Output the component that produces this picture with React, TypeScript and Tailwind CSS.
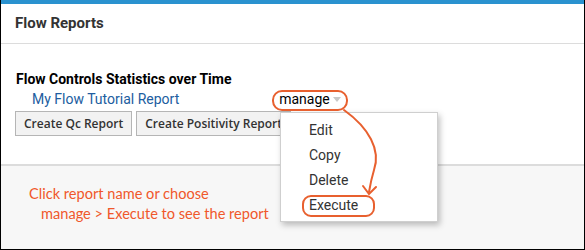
import React from 'react'

const menuItems = ['Edit', 'Copy', 'Delete', 'Execute']

export default function App() {
  return (
    <div className="relative w-[585px] h-[250px] overflow-hidden bg-white border-x border-b border-black font-['Roboto',sans-serif]">
      <div className="h-[4px] bg-[#2a92cf]" />
      {/* Panel header */}
      <div className="h-[40px] flex items-center px-[14px] border-b border-[#dcdcdc]">
        <h2 className="text-[15px] font-bold text-[#333]">Flow Reports</h2>
      </div>

      {/* Panel body */}
      <div className="h-[120px] pt-[26px] px-[15px]">
        <div className="text-[14px] font-bold text-black leading-[18px]">Flow Controls Statistics over Time</div>
        <div className="flex items-center h-[20px] mt-[1px]">
          <a className="ml-[16px] text-[14px] text-[#215da0]">My Flow Tutorial Report</a>
          <span className="ml-[100px] text-[14px] text-black flex items-center gap-[3px]">
            manage
            <span className="inline-block w-0 h-0 border-x-[4px] border-x-transparent border-t-[5px] border-t-[#c8c8c8]" />
          </span>
        </div>
        <div className="flex gap-[4px] mt-[2px] ml-[-1px]">
          <button className="h-[25px] px-[8px] bg-[#f2f2f2] border border-[#b5b5b5] text-[12px] font-semibold text-[#333] font-['Open_Sans',sans-serif]">
            Create Qc Report
          </button>
          <button className="h-[25px] px-[8px] bg-[#f2f2f2] border border-[#b5b5b5] text-[12px] font-semibold text-[#333] font-['Open_Sans',sans-serif] whitespace-nowrap">
            Create Positivity Report
          </button>
        </div>
      </div>

      {/* Callout area */}
      <div className="h-[86px] border-t-2 border-[#dcdcdc] bg-[#f7f7f7] pt-[18px] font-['Lato',sans-serif] text-[14.6px] text-[#f0582b] leading-[20px]">
        <div className="pl-[28px]">Click report name or choose</div>
        <div className="pl-[40px]">manage &gt; Execute to see the report</div>
      </div>

      {/* Dropdown menu */}
      <div className="absolute left-[279px] top-[112px] w-[158px] h-[110px] bg-white border border-[#cfcfcf] shadow-[2px_3px_6px_rgba(0,0,0,0.25)] pt-[5px]">
        {menuItems.map((item) => (
          <div key={item} className="h-[25px] flex items-center pl-[28px] text-[14px] text-[#333]">
            {item}
          </div>
        ))}
      </div>

      {/* Annotation outlines and arrow */}
      <div className="absolute left-[271px] top-[90px] w-[76px] h-[21px] rounded-[10px] border-2 border-[#e8602f]" />
      <div className="absolute left-[301px] top-[195px] w-[73px] h-[22px] rounded-[9px] border-2 border-[#e8602f]" />
      <svg className="absolute left-0 top-0" width="585" height="250" fill="none" stroke="#e8602f" strokeWidth="2" strokeLinecap="round">
        <path d="M343 110 C 368 128, 380 150, 373 170 C 370 180, 369 186, 368 192" />
        <path d="M362 186 L368 194 L375 187" />
      </svg>
    </div>
  )
}
